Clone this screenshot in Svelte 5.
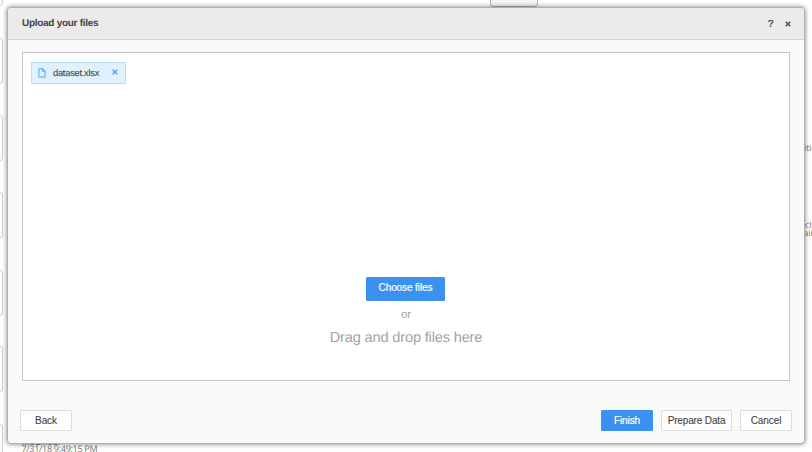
<script>
  const cards = [
    { top: -39, height: 45 },
    { top: 38, height: 46 },
    { top: 115, height: 46 },
    { top: 192, height: 46 },
    { top: 270, height: 46 },
    { top: 346, height: 46 },
    { top: 424, height: 46 }
  ];
</script>

<div class="screen">
  <div class="backdrop">
    {#each cards as card}
      <span class="thumb" style="top:{card.top}px;height:{card.height}px"></span>
    {/each}
    <span class="tab"></span>
    <span class="note" style="left:804px;top:141.5px">itie</span>
    <span class="note" style="left:805px;top:218.5px">clu</span>
    <span class="note" style="left:803.5px;top:227px">ain</span>
    <span class="note" style="left:22px;top:436px;color:#555">Modified:</span>
    <span class="note date">7/31/18 9:49:15 PM</span>
  </div>

  <section class="dialog">
    <header>
      <h1>Upload your files</h1>
      <div class="actions">
        <span class="help">?</span>
        <svg width="6" height="6" viewBox="0 0 6 6"><path d="M.7 .7L5.3 5.3M5.3 .7L.7 5.3" stroke="#555" stroke-width="1.6" /></svg>
      </div>
    </header>
    <main>
      <div class="dropzone">
        <div class="chip">
          <svg class="file" width="8" height="10" viewBox="0 0 8 10"><path d="M.9 .6H4.5L7.1 3.2V9.1H.9ZM4.5 .6V3.2H7.1" fill="none" stroke="#4a9cf0" stroke-width=".9" /></svg>
          <span class="name">dataset.xlsx</span>
          <svg width="6" height="6" viewBox="0 0 6 6"><path d="M.6 .6L5.4 5.4M5.4 .6L.6 5.4" stroke="#4596ef" stroke-width="1.2" /></svg>
        </div>
        <div class="prompt">
          <button class="primary choose">Choose files</button>
          <span class="or">or</span>
          <span class="drag">Drag and drop files here</span>
        </div>
      </div>
    </main>
    <footer>
      <button class="back">Back</button>
      <button class="primary finish">Finish</button>
      <button class="prepare">Prepare Data</button>
      <button class="cancel">Cancel</button>
    </footer>
  </section>
</div>

<style>
  .screen {
    position: relative;
    width: 812px;
    height: 452px;
    overflow: hidden;
    box-sizing: border-box;
    padding: 7px 7px 8px 7px;
    background: #fff;
    font-family: "Liberation Sans", Arial, sans-serif;
    text-rendering: geometricPrecision;
  }
  .screen * { box-sizing: border-box; }
  .backdrop { position: absolute; inset: 0; overflow: hidden; }
  .thumb {
    position: absolute;
    left: -50px;
    width: 52.5px;
    border: 1px solid #d0d0d0;
    border-radius: 3px;
    background: #fbfbfb;
  }
  .tab {
    position: absolute;
    left: 490px;
    top: -14px;
    width: 48px;
    height: 21px;
    border: 1px solid #b0b0b0;
    border-radius: 3px;
    background: #f5f5f5;
  }
  .note {
    position: absolute;
    font: 8.7px/12px "Open Sans", sans-serif;
    color: #777;
    white-space: nowrap;
  }
  .date { left: 21.5px; top: 443px; font-size: 9px; letter-spacing: -.29px; }
  .dialog {
    position: relative;
    display: flex;
    flex-direction: column;
    width: 798px;
    height: 437px;
    border: 1px solid #b0b0b0;
    border-radius: 4px;
    background: #fafafa;
    box-shadow: 0 0 5px rgba(0, 0, 0, .5);
    overflow: hidden;
  }
  header {
    display: flex;
    justify-content: space-between;
    align-items: center;
    height: 32px;
    padding: 0 13px 0 14px;
    background: #ebebeb;
    border-bottom: 1px solid #d3d3d3;
    flex: none;
  }
  h1 {
    margin: 0;
    padding-top: 1px;
    font-size: 10px;
    letter-spacing: -.29px;
    line-height: 12px;
    font-weight: 700;
    color: #444;
    white-space: nowrap;
  }
  .actions { display: flex; align-items: center; gap: 11px; }
  .help { font: bold 10.5px/12px "Liberation Sans", sans-serif; color: #555; }
  svg { display: block; flex: none; }
  main { padding: 12px 14px 0; flex: none; }
  .dropzone {
    display: flex;
    flex-direction: column;
    justify-content: space-between;
    align-items: flex-start;
    width: 768px;
    height: 329px;
    padding: 9px 8px 33px;
    border: 1px solid #c5c5c5;
    background: #fff;
  }
  .chip {
    display: flex;
    align-items: center;
    width: 95px;
    height: 22px;
    padding: 0 7px 0 6px;
    border: 1px solid #b5e0f7;
    border-radius: 1px;
    background: #e0f1fc;
  }
  .name {
    margin-left: 7px;
    margin-right: auto;
    font-size: 9.4px;
    letter-spacing: -.28px;
    line-height: 12px;
    color: #444;
    white-space: nowrap;
    -webkit-text-stroke: .1px #444;
  }
  .chip svg:last-child { margin-bottom: 2px; }
  .prompt {
    display: flex;
    flex-direction: column;
    align-items: center;
    align-self: center;
    margin-right: 1px;
    color: #a3a3a3;
  }
  .or { margin: 8px 0 0 1px; font-size: 11.5px; line-height: 13px; }
  .drag { margin: 7px 0 0 1px; font-size: 14.6px; letter-spacing: -.17px; line-height: 18px; white-space: nowrap; }
  footer {
    display: flex;
    gap: 8px;
    padding: 29px 12px 0;
  }
  button {
    height: 21px;
    padding: 0;
    border: 1px solid #ddd;
    border-radius: 1px;
    background: #fff;
    font: 10px/19px "Liberation Sans", Arial, sans-serif;
    letter-spacing: -.1px;
    color: #444;
    white-space: nowrap;
    -webkit-text-stroke: .1px #444;
  }
  .primary { border-color: #3b91ef; background: #3b91ef; color: #fff; -webkit-text-stroke: .2px #fff; }
  .choose { width: 79px; height: 24px; padding-bottom: 3px; }
  .back { width: 52px; margin-right: auto; }
  .finish { width: 52px; padding-bottom: 1px; }
  .prepare { width: 71px; letter-spacing: -.15px; }
  .cancel { width: 52px; }
</style>
